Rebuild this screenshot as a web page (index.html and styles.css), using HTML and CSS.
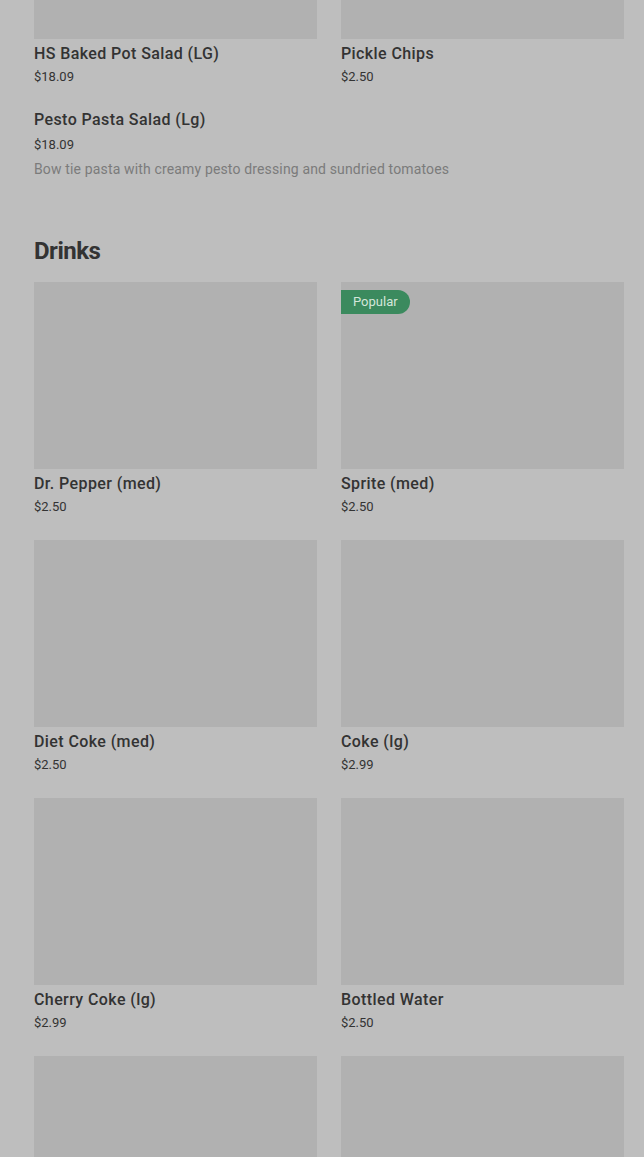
FILE: index.html
```html
<!DOCTYPE html>
<html lang="en">
<head>
  <meta charset="UTF-8" />
  <meta name="viewport" content="width=device-width, initial-scale=1.0"/>
  <title>Menu</title>
  <link rel="stylesheet" href="styles.css">
</head>
<body>
  <main class="menu">
    <section class="section section-top">
      <div class="grid">
        <div class="item">
          <div class="thumb"></div>
          <div class="name">HS Baked Pot Salad (LG)</div>
          <div class="price">$18.09</div>
        </div>
        <div class="item">
          <div class="thumb"></div>
          <div class="name">Pickle Chips</div>
          <div class="price">$2.50</div>
        </div>
      </div>
      <div class="item item-wide">
        <div class="name">Pesto Pasta Salad (Lg)</div>
        <div class="price">$18.09</div>
        <div class="desc">Bow tie pasta with creamy pesto dressing and sundried tomatoes</div>
      </div>
    </section>

    <section class="section">
      <h2 class="section-title">Drinks</h2>
      <div class="grid">
        <div class="item">
          <div class="thumb"></div>
          <div class="name">Dr. Pepper (med)</div>
          <div class="price">$2.50</div>
        </div>
        <div class="item">
          <div class="thumb"><span class="badge">Popular</span></div>
          <div class="name">Sprite (med)</div>
          <div class="price">$2.50</div>
        </div>
        <div class="item">
          <div class="thumb"></div>
          <div class="name">Diet Coke (med)</div>
          <div class="price">$2.50</div>
        </div>
        <div class="item">
          <div class="thumb"></div>
          <div class="name">Coke (lg)</div>
          <div class="price">$2.99</div>
        </div>
        <div class="item">
          <div class="thumb"></div>
          <div class="name">Cherry Coke (lg)</div>
          <div class="price">$2.99</div>
        </div>
        <div class="item">
          <div class="thumb"></div>
          <div class="name">Bottled Water</div>
          <div class="price">$2.50</div>
        </div>
        <div class="item">
          <div class="thumb"></div>
        </div>
        <div class="item">
          <div class="thumb"></div>
        </div>
      </div>
    </section>
  </main>
</body>
</html>
```

FILE: styles.css
```css
:root {
  --bg-color: #bebebe;
  --thumb-bg: #b1b1b1;
  --text-color: #333333;
  --muted: #7b7b7b;
  --badge-bg: #3b8a5e;
}

* {
  box-sizing: border-box;
}

body {
  margin: 0;
  background: var(--bg-color);
  color: var(--text-color);
  font-family: Roboto, 'Liberation Sans', sans-serif;
  overflow: hidden;
}

.menu {
  padding: 0 20px 0 34px;
}

.section-top {
  margin-top: -148px;
}

.grid {
  display: grid;
  grid-template-columns: 1fr 1fr;
  column-gap: 24px;
  row-gap: 24px;
}

.thumb {
  position: relative;
  height: 187px;
  background: var(--thumb-bg);
}

.badge {
  position: absolute;
  top: 8px;
  left: 0;
  padding: 0 12px;
  height: 24px;
  line-height: 24px;
  border-radius: 0 12px 12px 0;
  background: var(--badge-bg);
  color: #d4e6da;
  font-size: 13px;
}

.name {
  margin-top: 5px;
  font-size: 16px;
  line-height: 20px;
  font-weight: 500;
  letter-spacing: 0.4px;
}

.price {
  margin-top: 4px;
  font-size: 13px;
  line-height: 18px;
}

.item-wide {
  margin-top: 24px;
}

.item-wide .price {
  margin-top: 6px;
}

.desc {
  margin-top: 6px;
  font-size: 14px;
  line-height: 18px;
  color: var(--muted);
  letter-spacing: 0.15px;
}

.section-title {
  margin: 57px 0 15px;
  font-size: 24px;
  line-height: 32px;
  font-weight: 700;
  letter-spacing: -0.5px;
}
```
